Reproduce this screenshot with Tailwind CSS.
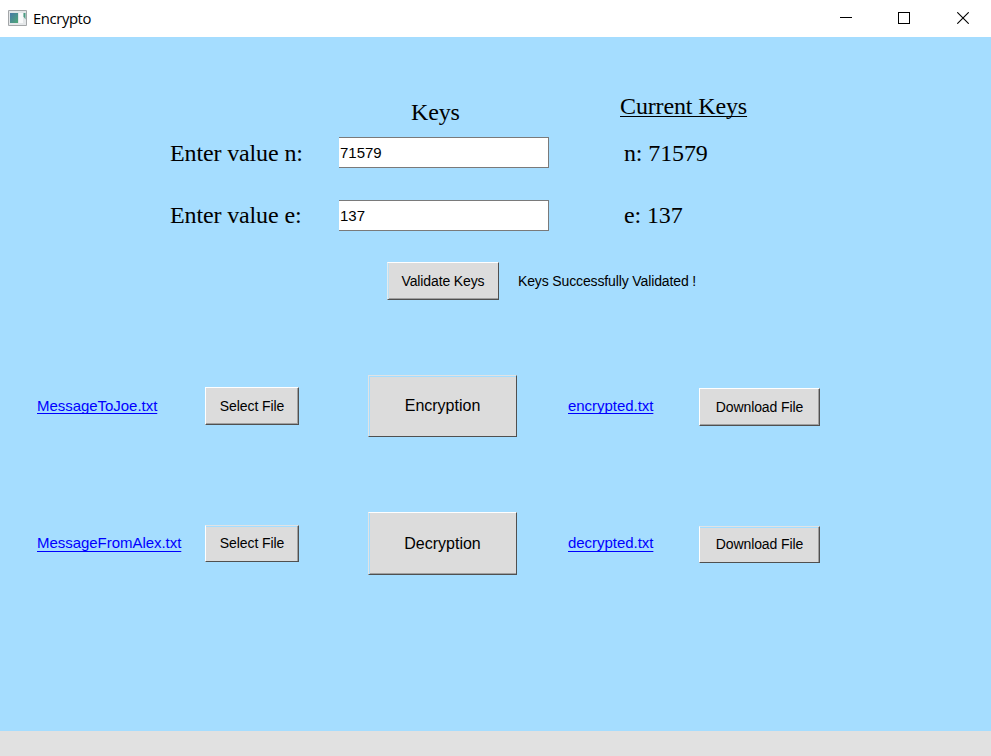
<!DOCTYPE html>
<html lang="en">
<head>
<meta charset="utf-8">
<title>Encrypto</title>
<script src="https://cdn.jsdelivr.net/npm/@tailwindcss/browser@4"></script>
</head>
<body class="flex h-[756px] w-[991px] flex-col overflow-hidden bg-[#a5ddff] text-black font-['Liberation_Sans',Arial,sans-serif]">
<header class="flex h-[37px] shrink-0 items-center bg-white">
  <svg class="ml-2 mb-[2px] shrink-0" width="19" height="16" viewBox="0 0 19 16">
    <defs><linearGradient id="g" x2="1" y2="1"><stop stop-color="#4778a8"/><stop offset="1" stop-color="#4fa876"/></linearGradient></defs>
    <path d="M.5.5h18v15H.5z" fill="#e4e7e9" stroke="#a3a6a8"/>
    <path d="M2 3h8v10H2z" fill="url(#g)"/><path d="M11 3h4v10h-4z" fill="#f8f9fa"/><path d="M15.5 3h2v6.500l-2-3z" fill="#4b9c83"/>
  </svg>
  <span class="mb-[2px] ml-[6px] w-[60px] text-[14.8px] leading-5 font-['Open_Sans','Noto_Sans',sans-serif] tracking-[-0.38px]">Encrypto</span>
  <div class="ml-auto flex items-center">
    <svg width="12" height="12" shape-rendering="crispEdges"><path d="M0 4.5h12" stroke="#000"/></svg>
    <svg class="ml-[46px] mb-px" width="12" height="12" shape-rendering="crispEdges"><path d="M.5.5h11v11H.5z" fill="none" stroke="#000"/></svg>
    <svg class="ml-[47px] mr-[22px] mb-px" width="12" height="12"><path d="M.3.3l11.4 11.4M11.7.3L.3 11.7" stroke="#000" stroke-width="1.1"/></svg>
  </div>
</header>
<main class="flex h-[694px] shrink-0 flex-col whitespace-nowrap">
  <section class="pl-[170px] font-['Liberation_Serif','Times_New_Roman',serif] text-[24px] leading-[30px] tracking-[-0.13px]">
    <div class="flex h-[100px] items-start">
      <h1 class="ml-[241px] mt-[60px] w-[209px]">Keys</h1>
      <h2 class="mt-[54px] underline decoration-1 underline-offset-[2px] [text-decoration-skip-ink:none]">Current Keys</h2>
    </div>
    <div class="flex h-[31px] items-center">
      <label class="w-[169px]" for="n">Enter value n:</label>
      <input id="n" value="71579" class="h-[31px] w-[210px] border border-l-0 border-[#7a7a7a] bg-white pl-[1px] pb-px text-[15px] tracking-normal font-['Liberation_Sans',Arial,sans-serif]">
      <span class="ml-[75px]">n: 71579</span>
    </div>
    <div class="mt-8 flex h-[31px] items-center">
      <label class="w-[169px] pb-[2px]" for="e">Enter value e:</label>
      <input id="e" value="137" class="h-[31px] w-[210px] border border-l-0 border-[#7a7a7a] bg-white pl-[1px] pb-px text-[15px] tracking-normal font-['Liberation_Sans',Arial,sans-serif]">
      <span class="ml-[75px] pb-[2px]">e: 137</span>
    </div>
  </section>
  <section class="mt-[31px] flex h-[38px] items-center pl-[387px] text-[14px] tracking-[-0.13px]">
    <button class="h-[38px] w-[112px] border border-t-[#fff] border-l-[#e4eaed] border-r-[#505050] border-b-[#505050] bg-[#dcdcdc] shadow-[inset_1px_0_#bde0f2,inset_0_-1px_#a0a0a0]">Validate Keys</button>
    <span class="ml-[19px]">Keys Successfully Validated !</span>
  </section>
  <section class="mt-[75px] flex h-[62px] items-start pl-[37px] text-[14px] tracking-[-0.1px]">
    <a class="mt-[20px] w-[168px] text-[15px] leading-[22px] tracking-[-0.04px] text-[#00f] underline decoration-1 underline-offset-[2px] [text-decoration-skip-ink:none]">MessageToJoe.txt</a>
    <button class="mt-[12px] h-[38px] w-[94px] border border-t-[#fff] border-l-[#fff] border-r-[#505050] border-b-[#505050] bg-[#dcdcdc] shadow-[inset_-1px_-1px_#a0a0a0]">Select File</button>
    <button class="ml-[69px] h-[62px] w-[149px] border border-t-[#e0e3e5] border-l-[#e0e3e5] border-r-[#505050] border-b-[#505050] bg-[#dcdcdc] text-[16px] tracking-normal shadow-[inset_1px_1px_#a5ddff]">Encryption</button>
    <a class="ml-[51px] mt-[20px] w-[131px] text-[15px] leading-[22px] tracking-[-0.04px] text-[#00f] underline decoration-1 underline-offset-[2px] [text-decoration-skip-ink:none]">encrypted.txt</a>
    <button class="mt-[13px] h-[38px] w-[121px] border border-t-[#fff] border-l-[#fff] border-r-[#505050] border-b-[#505050] bg-[#dcdcdc] shadow-[inset_-1px_-1px_#a0a0a0]">Download File</button>
  </section>
  <section class="mt-[75px] flex h-[63px] items-start pl-[37px] text-[14px] tracking-[-0.1px]">
    <a class="mt-[20px] w-[168px] text-[15px] leading-[22px] tracking-[-0.04px] text-[#00f] underline decoration-1 underline-offset-[3px] [text-decoration-skip-ink:none]">MessageFromAlex.txt</a>
    <button class="mt-[13px] h-[37px] w-[94px] border border-t-[#e0e3e5] border-l-[#fff] border-r-[#505050] border-b-[#505050] bg-[#dcdcdc] shadow-[inset_-1px_0_#a0a0a0,inset_0_1px_#a5ddff]">Select File</button>
    <button class="ml-[69px] h-[63px] w-[149px] border border-t-[#fff] border-l-[#e0e3e5] border-r-[#505050] border-b-[#505050] bg-[#dcdcdc] text-[16px] tracking-normal shadow-[inset_1px_0_#a5ddff,inset_0_-1px_#a0a0a0]">Decryption</button>
    <a class="ml-[51px] mt-[20px] w-[131px] text-[15px] leading-[22px] tracking-[-0.04px] text-[#00f] underline decoration-1 underline-offset-[3px] [text-decoration-skip-ink:none]">decrypted.txt</a>
    <button class="mt-[14px] h-[37px] w-[121px] border border-t-[#e0e3e5] border-l-[#fff] border-r-[#505050] border-b-[#505050] bg-[#dcdcdc] shadow-[inset_-1px_0_#a0a0a0,inset_0_1px_#a5ddff]">Download File</button>
  </section>
</main>
<footer class="h-[25px] shrink-0 bg-[#e1e1e1]"></footer>
</body>
</html>
